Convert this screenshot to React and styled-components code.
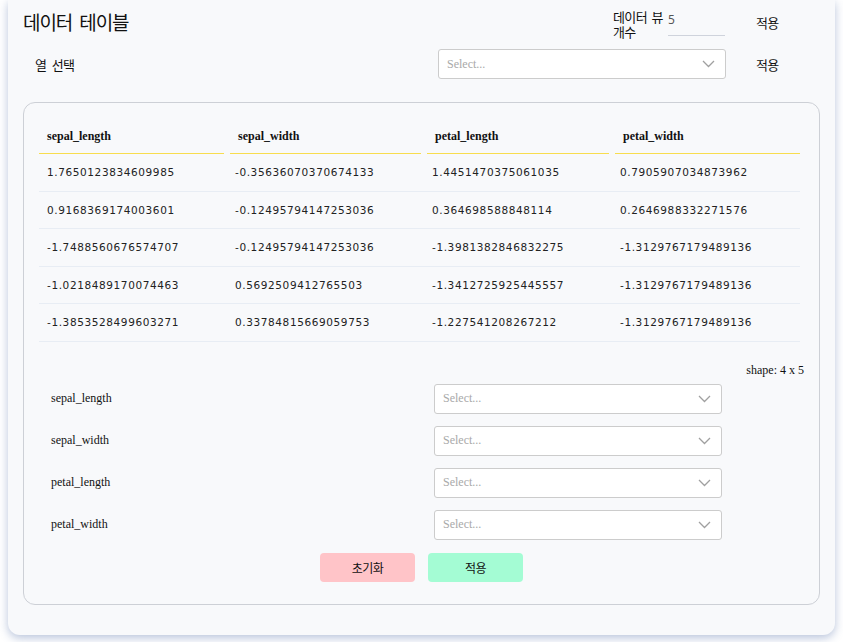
import React from "react";
import styled, { createGlobalStyle } from "styled-components";

const Global = createGlobalStyle`
  html, body { margin: 0; padding: 0; background: #ffffff; }
  body { padding: 0 8px 8px; font-family: "Noto Sans CJK KR", "Noto Sans", sans-serif; color: #111; }
  * { box-sizing: border-box; }
`;

const Card = styled.div`
  background: #f8f9fb;
  border-radius: 0 0 12px 12px;
  box-shadow: 0 3px 10px rgba(70, 100, 160, 0.38);
  padding: 6px 15px 30px;
`;

const TopGrid = styled.div`
  display: grid;
  grid-template-columns: 1fr 288px 94px;
  grid-template-rows: 40px 36px;
  align-items: center;
`;

const Title = styled.h1`
  align-self: start;
  margin: 0;
  font-size: 19px;
  font-weight: 400;
  letter-spacing: -1.1px;
  word-spacing: 4px;
  line-height: 31px;
`;

const ColLabel = styled.div`
  padding-left: 12px;
  font-size: 13px;
  letter-spacing: -0.6px;
  word-spacing: 3px;
`;

const ViewCount = styled.div`
  display: flex;
  justify-content: flex-end;
  align-items: flex-start;
  gap: 1px;
  align-self: start;
`;

const ViewLabel = styled.div`
  width: 54px;
  font-size: 13px;
  line-height: 15px;
  padding-top: 3px;
  letter-spacing: -0.6px;
  word-spacing: 2px;
`;

const NumInput = styled.div`
  width: 57px;
  height: 30px;
  border-bottom: 1px solid #cfd3dc;
  font-family: "Noto Sans", sans-serif;
  font-size: 12px;
  color: #555;
  padding-top: 5px;
  margin-right: 1px;
`;

const ApplyText = styled.div`
  padding-left: 30px;
  font-size: 13px;
  letter-spacing: -0.6px;
  align-self: ${(p) => (p.$top ? "start" : "center")};
  padding-top: ${(p) => (p.$top ? 7 : 0)}px;
`;

const SelectBox = styled.div`
  height: 30px;
  background: #ffffff;
  border: 1px solid #cccccc;
  border-radius: 3px;
  display: flex;
  align-items: center;
  justify-content: space-between;
  padding: 0 10px 0 8px;
  font-family: "Liberation Serif", serif;
  font-size: 12px;
  color: #a9a9a9;
`;

const Chevron = () => (
  <svg width="13" height="8" viewBox="0 0 13 8">
    <polyline points="1,1 6.5,6.5 12,1" fill="none" stroke="#a0a0a0" strokeWidth="1.3" />
  </svg>
);

const Select = () => (
  <SelectBox>
    <span>Select...</span>
    <Chevron />
  </SelectBox>
);

const Inner = styled.div`
  margin-top: 20px;
  border: 1px solid #cdd0d6;
  border-radius: 12px;
  padding: 16px 15px 22px;
`;

const TableWrap = styled.div`
  padding-right: 4px;
`;

const Table = styled.table`
  width: 100%;
  border-collapse: collapse;
`;

const Th = styled.th`
  padding: 0;
  text-align: left;
  font-family: "Liberation Serif", serif;
  font-weight: 700;
  font-size: 12px;
`;

const ThInner = styled.div`
  margin: 0 ${(p) => (p.$last ? 0 : 3)}px 0 ${(p) => (p.$first ? 0 : 3)}px;
  padding: 9px 5px 8px 8px;
  line-height: 17px;
  border-bottom: 1px solid #f8dd4e;
`;

const Td = styled.td`
  padding: 10px 8px;
  line-height: 16.6px;
  border-bottom: 1px solid #e8edf4;
  font-family: "DejaVu Sans", sans-serif;
  font-size: 10.5px;
  letter-spacing: 0.6px;
  color: #222;
`;

const Shape = styled.div`
  margin-top: 20px;
  text-align: right;
  font-family: "Liberation Serif", serif;
  font-size: 12px;
  line-height: 16px;
`;

const FormGrid = styled.div`
  margin-top: 6px;
  display: grid;
  grid-template-columns: 1fr 288px 82px;
  row-gap: 12px;
  align-items: center;
`;

const FieldLabel = styled.div`
  padding-left: 12px;
  font-family: "Liberation Serif", serif;
  font-size: 12px;
`;

const Buttons = styled.div`
  margin-top: 13px;
  display: flex;
  justify-content: center;
  gap: 13px;
`;

const Btn = styled.button`
  width: 95px;
  height: 29px;
  border: none;
  border-radius: 4px;
  background: ${(p) => (p.$kind === "reset" ? "#ffc4c8" : "#a4fcd4")};
  font-family: "Noto Sans CJK KR", sans-serif;
  font-size: 12px;
  letter-spacing: -0.5px;
  color: #111;
  padding: 0;
`;

const cols = ["sepal_length", "sepal_width", "petal_length", "petal_width"];
const rows = [
  ["1.7650123834609985", "-0.35636070370674133", "1.4451470375061035", "0.7905907034873962"],
  ["0.9168369174003601", "-0.12495794147253036", "0.364698588848114", "0.2646988332271576"],
  ["-1.7488560676574707", "-0.12495794147253036", "-1.3981382846832275", "-1.3129767179489136"],
  ["-1.0218489170074463", "0.5692509412765503", "-1.3412725925445557", "-1.3129767179489136"],
  ["-1.3853528499603271", "0.33784815669059753", "-1.227541208267212", "-1.3129767179489136"],
];

export default function App() {
  return (
    <>
      <Global />
      <Card>
        <TopGrid>
          <Title>데이터 테이블</Title>
          <ViewCount>
            <ViewLabel>데이터 뷰 개수</ViewLabel>
            <NumInput>5</NumInput>
          </ViewCount>
          <ApplyText $top>적용</ApplyText>
          <ColLabel>열 선택</ColLabel>
          <Select />
          <ApplyText>적용</ApplyText>
        </TopGrid>
        <Inner>
          <TableWrap>
            <Table>
              <colgroup>
                <col style={{ width: "188px" }} />
                <col style={{ width: "197px" }} />
                <col style={{ width: "188px" }} />
                <col />
              </colgroup>
              <thead>
                <tr>
                  {cols.map((c, i) => (
                    <Th key={c}>
                      <ThInner $first={i === 0} $last={i === cols.length - 1}>{c}</ThInner>
                    </Th>
                  ))}
                </tr>
              </thead>
              <tbody>
                {rows.map((r, i) => (
                  <tr key={i}>
                    {r.map((v, j) => (
                      <Td key={j}>{v}</Td>
                    ))}
                  </tr>
                ))}
              </tbody>
            </Table>
          </TableWrap>
          <Shape>shape: 4 x 5</Shape>
          <FormGrid>
            {cols.map((c) => (
              <React.Fragment key={c}>
                <FieldLabel>{c}</FieldLabel>
                <Select />
                <div />
              </React.Fragment>
            ))}
          </FormGrid>
          <Buttons>
            <Btn $kind="reset">초기화</Btn>
            <Btn $kind="apply">적용</Btn>
          </Buttons>
        </Inner>
      </Card>
    </>
  );
}
